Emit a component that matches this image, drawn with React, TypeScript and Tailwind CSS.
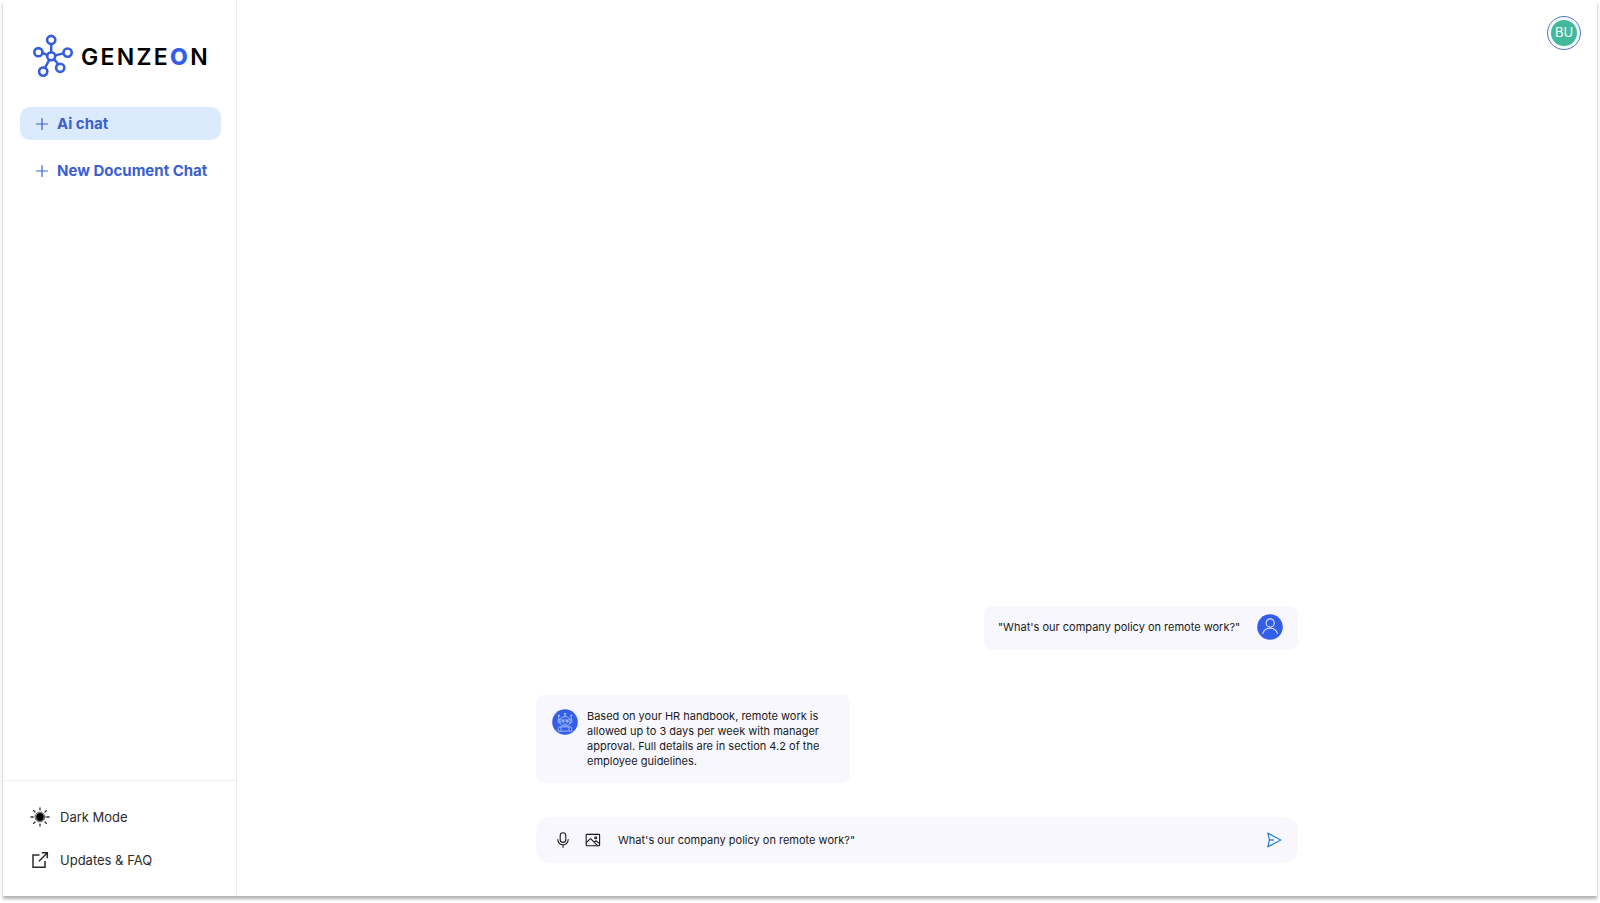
import React from 'react';

const iconProps = {
  fill: 'none',
  stroke: 'currentColor',
  strokeLinecap: 'round' as const,
  strokeLinejoin: 'round' as const,
  'aria-hidden': true,
};

const LogoMark: React.FC = () => (
  <svg className="w-10 h-11 text-[#335ddd]" viewBox="0 0 40 44" {...iconProps} strokeWidth="2.4">
    <path d="M18.2 10.4V18.2M9.6 18.9l4.4 1.9M30.2 19.4l-7.6 2M16 26.4l-3.9 7.2M21.2 25.4l4.2 4.8" />
    <circle cx="18.2" cy="22.3" r="4" strokeWidth="2.6" />
    <circle cx="18.2" cy="6" r="4.1" strokeWidth="2.6" />
    <circle cx="5.4" cy="18.2" r="4.1" strokeWidth="2.6" />
    <circle cx="34.6" cy="18.6" r="4.1" strokeWidth="2.6" />
    <circle cx="10.2" cy="37.6" r="4.1" strokeWidth="2.6" />
    <circle cx="27.2" cy="33.8" r="4.1" strokeWidth="2.6" />
  </svg>
);

const PlusIcon: React.FC = () => (
  <svg className="w-3 h-3" viewBox="0 0 12 12" {...iconProps} strokeWidth="1.2">
    <path d="M6 .6v10.8M.6 6h10.8" />
  </svg>
);

const SunIcon: React.FC = () => (
  <svg className="w-5 h-5" viewBox="0 0 20 20" {...iconProps} strokeWidth="1.3">
    <circle cx="10" cy="10" r="3.9" fill="#000" stroke="none" />
    <circle cx="10" cy="10" r="4.9" strokeWidth=".8" />
    <path d="M10 1v1.8M10 17.2V19M1 10h2.2M16.8 10H19M3.6 3.6l1.4 1.4M15 15l1.4 1.4M3.6 16.4 5 15M15 5l1.4-1.4" />
  </svg>
);

const ExternalIcon: React.FC = () => (
  <svg className="w-5 h-5" viewBox="0 0 20 20" {...iconProps} strokeLinecap="butt" strokeLinejoin="miter" strokeWidth="1.5">
    <path d="M9.5 5H3v12.2h12V11M8.9 11.2 17.2 3M11.8 2.8h5.5v5.5" />
  </svg>
);

const MicIcon: React.FC = () => (
  <svg className="w-4 h-4" viewBox="0 0 16 16" {...iconProps} strokeWidth="1.1">
    <rect x="5.2" y=".8" width="5.6" height="9.6" rx="2.8" />
    <path d="M2.8 7.6a5.2 5.2 0 0 0 10.4 0M8 12.8v2.4" />
  </svg>
);

const PictureIcon: React.FC = () => (
  <svg className="w-4 h-4" viewBox="0 0 16 16" {...iconProps} strokeWidth="1.1">
    <rect x="1.2" y="2.4" width="13.4" height="11.4" rx=".6" />
    <path d="M1.4 10.4 5.6 6.6l7 7M9.2 10.2l1.8-1.5 3.4 3" />
    <circle cx="10.7" cy="5.8" r="1" />
  </svg>
);

const SendIcon: React.FC = () => (
  <svg className="w-4 h-4" viewBox="0 0 16 16" {...iconProps} strokeWidth="1.3">
    <path d="M1.8 1.2 14.8 8 1.8 14.8 3.5 8zM3.5 8h4" />
  </svg>
);

const UserAvatar: React.FC = () => (
  <svg className="w-[26px] h-[26px] shrink-0" viewBox="0 0 26 26" {...iconProps} stroke="#dfe6ff" strokeWidth="1.1">
    <circle cx="13" cy="13" r="12.8" fill="#335eea" stroke="none" />
    <circle cx="13.2" cy="9" r="4.1" />
    <path d="M5.8 19.4c.9-3.4 3.8-5.2 7.3-5.2s6.4 1.8 7.3 5.2" />
  </svg>
);

const BotAvatar: React.FC = () => (
  <svg className="w-[26px] h-[26px] shrink-0" viewBox="0 0 26 26" {...iconProps} stroke="#b9cdff" strokeWidth=".8">
    <circle cx="13" cy="13" r="12.8" fill="#335eea" stroke="none" />
    <path d="M13 4.8v3M6.8 7v3.4M19.2 7v3.4" />
    <circle cx="13" cy="4.9" r=".7" />
    <circle cx="6.8" cy="6.6" r=".6" />
    <circle cx="19.2" cy="6.6" r=".6" />
    <path d="M7.8 12.2c0-3 2.2-4.6 5.2-4.6s5.2 1.6 5.2 4.6-2 4.8-5.2 4.8-5.2-1.8-5.2-4.8z" />
    <path d="M7.8 10.6H6.2v3.2h1.8M18.2 10.6h1.6v3.2H18M9.4 11h7.2" />
    <circle cx="10.9" cy="12.4" r=".9" />
    <circle cx="15.1" cy="12.4" r=".9" />
    <path d="M11.4 14.9c1 .7 2.2.7 3.2 0M6.2 21.8v-2.2c0-1 .6-1.7 1.6-1.7h10.4c1 0 1.6.7 1.6 1.7v2.2zM9 18v3.6M17 18v3.6" />
  </svg>
);

const Sidebar: React.FC = () => {
  const links = [
    { label: 'Ai chat', active: true },
    { label: 'New Document Chat', active: false },
  ];

  return (
    <aside className="w-[234px] shrink-0 flex flex-col border-r border-[#ededed]">
      <a href="#" className="flex items-center gap-2 mt-[34px] ml-[30px]">
        <LogoMark />
        <span className="pt-0.5 text-[23px] leading-6 font-semibold tracking-widest text-black">
          GENZE<span className="font-extrabold text-[#335eea]">O</span>N
        </span>
      </a>

      <nav className="flex flex-col gap-[14px] mt-[29px] pl-[17px] pr-[15px]">
        {links.map((link) => (
          <button
            key={link.label}
            type="button"
            className={`flex items-center gap-[9px] h-[33px] pt-px pl-4 rounded-[10px] text-[15px] leading-5 font-bold whitespace-nowrap text-[#3b5fd0] ${
              link.active ? 'bg-[#dbeafc]' : ''
            }`}
          >
            <PlusIcon />
            {link.label}
          </button>
        ))}
      </nav>

      <div className="flex flex-col gap-[19px] mt-auto pt-6 pb-6 pl-[27px] border-t border-[#ededed] text-[13px] leading-6 text-[#2b2b2b]">
        <button type="button" className="flex items-center gap-[10px]">
          <SunIcon />
          Dark Mode
        </button>
        <a href="#" className="flex items-center gap-[10px]">
          <ExternalIcon />
          Updates &amp; FAQ
        </a>
      </div>
    </aside>
  );
};

const Chat: React.FC = () => (
  <div className="flex flex-col w-full max-w-[762px] mx-auto mt-auto pb-[33px] text-[11px] leading-[15px] text-[#1a1a1a]">
    <div className="self-end flex items-center justify-between w-[314px] h-11 pl-[14px] pr-[15px] pb-0.5 rounded-lg bg-[#f7f7fd]">
      <p className="whitespace-nowrap">"What's our company policy on remote work?"</p>
      <UserAvatar />
    </div>

    <div className="flex items-start gap-[9px] w-[314px] mt-[45px] px-4 py-[14px] rounded-lg bg-[#f7f7fd]">
      <BotAvatar />
      <p>
        Based on your HR handbook, remote work is allowed up to 3 days per week with manager approval. Full details
        are in section 4.2 of the employee guidelines.
      </p>
    </div>

    <form className="flex items-center h-[46px] mt-[34px] pl-[19px] pr-4 rounded-[14px] bg-[#f7f7fd]">
      <button type="button" aria-label="Record voice">
        <MicIcon />
      </button>
      <button type="button" aria-label="Attach image" className="ml-[14px]">
        <PictureIcon />
      </button>
      <input
        type="text"
        aria-label="Message"
        defaultValue={'What\'s our company policy on remote work?"'}
        className="flex-1 min-w-0 mx-[17px] bg-transparent outline-none"
      />
      <button type="button" aria-label="Send" className="text-[#2f86d6]">
        <SendIcon />
      </button>
    </form>
  </div>
);

const App: React.FC = () => {
  return (
    <div className="min-h-screen flex px-[3px] pb-[7px] bg-white font-['Inter','Liberation_Sans',sans-serif]">
      <div className="flex flex-1 bg-white shadow-[0_3px_3px_rgba(0,0,0,0.3)]">
        <Sidebar />
        <main className="flex-1 flex flex-col">
          <header className="flex justify-end pt-4 pr-4">
            <button
              type="button"
              aria-label="Account BU"
              className="w-[34px] h-[34px] p-[3px] rounded-full border border-[#5a78b8] bg-[#f0fbfd]"
            >
              <span className="flex items-center justify-center w-full h-full rounded-full bg-[#42b99a] text-[13px] text-white">
                BU
              </span>
            </button>
          </header>
          <Chat />
        </main>
      </div>
    </div>
  );
};

export default App;
